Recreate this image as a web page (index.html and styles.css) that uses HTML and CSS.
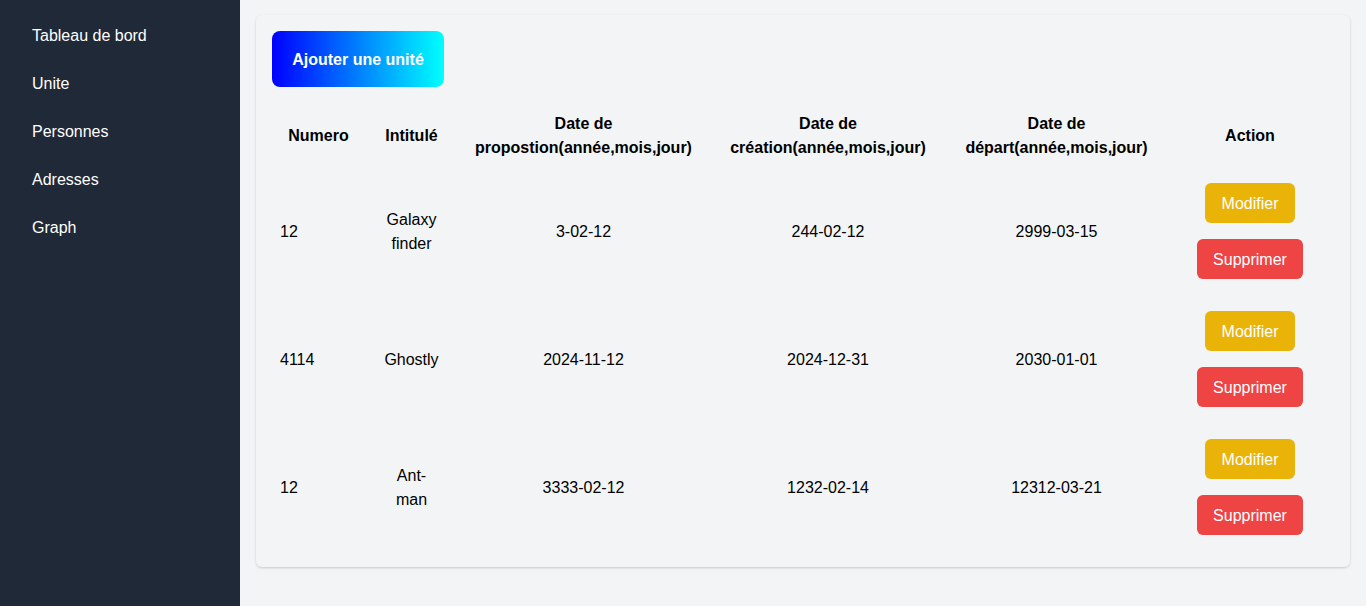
FILE: index.html
```html
<!DOCTYPE html>
<html lang="fr">
<head>
<meta charset="utf-8">
<title>Unités</title>
<link rel="stylesheet" href="styles.css">
</head>
<body>
<div class="layout">
  <nav class="sidebar">
    <ul class="menu">
      <li class="menu-item">Tableau de bord</li>
      <li class="menu-item">Unite</li>
      <li class="menu-item">Personnes</li>
      <li class="menu-item">Adresses</li>
      <li class="menu-item">Graph</li>
    </ul>
  </nav>
  <main class="main">
    <section class="card">
      <button class="add-btn">Ajouter une unité</button>
      <table class="units">
        <colgroup>
          <col class="w1"><col class="w2"><col class="w3"><col class="w4"><col class="w5"><col class="w6">
        </colgroup>
        <thead>
          <tr>
            <th>Numero</th>
            <th>Intitulé</th>
            <th>Date de propostion(année,mois,jour)</th>
            <th>Date de création(année,mois,jour)</th>
            <th>Date de départ(année,mois,jour)</th>
            <th>Action</th>
          </tr>
        </thead>
        <tbody>
          <tr>
            <td class="num">12</td>
            <td class="name">Galaxy finder</td>
            <td>3-02-12</td>
            <td>244-02-12</td>
            <td>2999-03-15</td>
            <td class="act"><div class="actions"><button class="btn edit">Modifier</button><button class="btn del">Supprimer</button></div></td>
          </tr>
          <tr>
            <td class="num">4114</td>
            <td class="name">Ghostly</td>
            <td>2024-11-12</td>
            <td>2024-12-31</td>
            <td>2030-01-01</td>
            <td class="act"><div class="actions"><button class="btn edit">Modifier</button><button class="btn del">Supprimer</button></div></td>
          </tr>
          <tr>
            <td class="num">12</td>
            <td class="name">Ant-man</td>
            <td>3333-02-12</td>
            <td>1232-02-14</td>
            <td>12312-03-21</td>
            <td class="act"><div class="actions"><button class="btn edit">Modifier</button><button class="btn del">Supprimer</button></div></td>
          </tr>
        </tbody>
      </table>
    </section>
  </main>
</div>
</body>
</html>
```

FILE: styles.css
```css
* { box-sizing: border-box; }
html, body {
  margin: 0;
  padding: 0;
  height: 100%;
}
body {
  font-family: "Liberation Sans", Arial, sans-serif;
  font-size: 16px;
  line-height: 24px;
  color: #000;
  background: #f3f4f6;
}
.layout {
  display: flex;
  min-height: 606px;
}
.sidebar {
  width: 240px;
  flex: 0 0 240px;
  background: #1f2937;
  padding: 12px 16px;
}
.menu {
  list-style: none;
  margin: 0;
  padding: 0;
}
.menu-item {
  color: #ffffff;
  padding: 12px 16px;
}
.main {
  flex: 1;
  padding: 15px 16px;
}
.card {
  background: #f3f4f6;
  border-radius: 6px;
  box-shadow: 0 1px 3px rgba(0,0,0,0.12), 0 1px 2px rgba(0,0,0,0.06);
  padding: 16px;
}
.add-btn {
  display: block;
  font-family: inherit;
  font-size: 16px;
  line-height: 24px;
  font-weight: bold;
  color: #fff;
  border: none;
  border-radius: 8px;
  padding: 17px 20px 15px;
  width: 172px;
  background: linear-gradient(to right, #0000ff, #00ffff);
}
.units {
  margin-top: 16px;
  width: 100%;
  table-layout: fixed;
  border-collapse: collapse;
}
.w1 { width: 93px; }
.w2 { width: 93px; }
.w3 { width: 251px; }
.w4 { width: 238px; }
.w5 { width: 219px; }
.w6 { width: 168px; }
.units th {
  font-weight: bold;
  padding: 9px 8px 7px;
  text-align: center;
  vertical-align: middle;
}
.units td {
  padding: 17px 8px 15px;
  text-align: center;
  vertical-align: middle;
}
.units td.act { padding: 16px 8px; }
.units td.num { text-align: left; }
.units td.name { padding-left: 17px; padding-right: 17px; }
.actions {
  display: flex;
  flex-direction: column;
  align-items: center;
  gap: 16px;
}
.btn {
  font-family: inherit;
  font-size: 16px;
  line-height: 24px;
  color: #fff;
  border: none;
  border-radius: 6px;
  padding: 9px 16px 7px;
}
.edit { background: #eab308; padding-left: 17px; padding-right: 17px; }
.del { background: #ef4444; }
```
